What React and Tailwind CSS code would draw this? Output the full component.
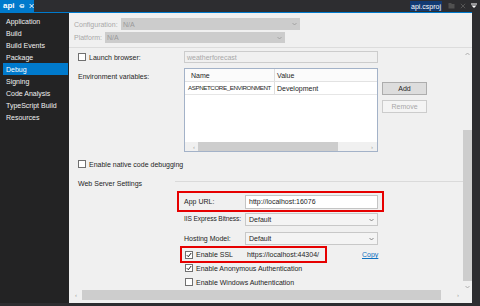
import React from "react";

function Chevron({ color = "#707070" }) {
  return (
    <svg width="5" height="4" viewBox="0 0 5 4" className="shrink-0">
      <path d="M0.5 1 L2.5 3 L4.5 1" fill="none" stroke={color} strokeWidth="0.8" />
    </svg>
  );
}

function Check({ checked }) {
  return (
    <div className="w-[8px] h-[8px] bg-white border border-[#707070] flex items-center justify-center shrink-0">
      {checked && (
        <svg width="6" height="6" viewBox="0 0 6 6">
          <path d="M0.8 3.2 L2.3 4.7 L5.2 1" fill="none" stroke="#1e1e1e" strokeWidth="1" />
        </svg>
      )}
    </div>
  );
}

function Drop({ value, w = "w-[133px]" }) {
  return (
    <div className={`${w} h-[13px] bg-[#f4f4f4] border border-[#c8c8c8] flex items-center justify-between pl-[3px] pr-[3px]`}>
      <span>{value}</span>
      <Chevron />
    </div>
  );
}

const nav = [
  "Application",
  "Build",
  "Build Events",
  "Package",
  "Debug",
  "Signing",
  "Code Analysis",
  "TypeScript Build",
  "Resources",
];

export default function App() {
  return (
    <div className="w-[480px] h-[306px] bg-[#2d2d30] flex flex-col overflow-hidden font-['Liberation_Sans',Arial,sans-serif] text-[7px] leading-none text-[#1e1e1e] whitespace-nowrap">
      {/* top bar */}
      <div className="h-[12px] flex items-stretch shrink-0">
        <div className="w-[34px] bg-[#007acc] flex items-center pl-[3px] gap-[4px] text-white">
          <span className="text-[8px] font-bold">api</span>
          <svg width="7" height="6" viewBox="0 0 7 6">
            <path d="M0 3 H2 M2 1.2 V4.8 M2 1.5 H5.5 V4.5 H2 M2 3.8 H5.5" fill="none" stroke="white" strokeWidth="0.9" />
          </svg>
          <svg width="6" height="6" viewBox="0 0 6 6">
            <path d="M0.8 0.8 L5.2 5.2 M5.2 0.8 L0.8 5.2" stroke="white" strokeWidth="1.1" />
          </svg>
        </div>
        <div className="flex-1" />
        <div className="flex items-center">
          <span className="bg-[#123a73] text-white text-[7px] px-[1px] h-[10px] flex items-center">api.csproj</span>
          <svg width="7" height="6" viewBox="0 0 7 6" className="ml-[6px]">
            <rect x="0.5" y="1" width="6" height="4.5" fill="#505050" />
            <rect x="0.5" y="0" width="3" height="1.5" fill="#505050" />
          </svg>
          <svg width="6" height="6" viewBox="0 0 6 6" className="ml-[5px]">
            <path d="M0.8 0.8 L5.2 5.2 M5.2 0.8 L0.8 5.2" stroke="#555" strokeWidth="1" />
          </svg>
          <svg width="6" height="6" viewBox="0 0 6 6" className="ml-[5px] mr-[3px]">
            <rect x="0" y="0.5" width="6" height="1" fill="white" />
            <path d="M0.5 2.5 H5.5 L3 5 Z" fill="white" />
          </svg>
        </div>
      </div>
      <div className="h-[1px] w-[472px] bg-[#007acc] shrink-0" />

      {/* body */}
      <div className="h-[290px] flex shrink-0">
        {/* sidebar */}
        <div className="w-[69px] bg-[#232324] pt-[2px] flex flex-col text-[#f1f1f1]">
          {nav.map((n) =>
            n === "Debug" ? (
              <div key={n} className="h-[12px] ml-[3px] mr-[1px] pl-[3px] bg-[#007acc] flex items-center text-white">
                {n}
              </div>
            ) : (
              <div key={n} className="h-[12px] pl-[6px] flex items-center">
                {n}
              </div>
            )
          )}
        </div>

        {/* main */}
        <div className="w-[403px] bg-[#f0f0f0] flex flex-col">
          {/* header */}
          <div className="h-[34px] flex flex-col pl-[5px] pt-[5px] gap-[2px] text-[#a8a8a8] shrink-0">
            <div className="h-[12px] flex items-center">
              <span className="w-[47px]">Configuration:</span>
              <div className="w-[179px] h-[12px] bg-[#cccccc] flex items-center justify-between pl-[2px] pr-[3px] text-[#9a9a9a]">
                <span>N/A</span>
                <Chevron color="#999" />
              </div>
            </div>
            <div className="h-[11px] flex items-center">
              <span className="w-[31px]">Platform:</span>
              <div className="w-[180px] h-[11px] bg-[#cccccc] flex items-center justify-between pl-[2px] pr-[3px] text-[#9a9a9a]">
                <span>N/A</span>
                <Chevron color="#999" />
              </div>
            </div>
          </div>
          <div className="h-[1px] bg-[#dcdcdc] shrink-0" />

          {/* scroll region */}
          <div className="flex-1 flex min-h-0">
            <div className="w-[394px] flex flex-col">
              <div className="h-[242px] flex flex-col pl-[9px] overflow-hidden">
                {/* launch browser */}
                <div className="mt-[3px] h-[12px] flex items-center">
                  <div className="w-[106px] flex items-center gap-[3px]">
                    <Check />
                    <span>Launch browser:</span>
                  </div>
                  <div className="w-[194px] h-[12px] border border-[#cccccc] flex items-center pl-[2px] text-[#a8a8a8]">
                    weatherforecast
                  </div>
                </div>

                {/* env vars */}
                <div className="mt-[5px] h-[84px] flex items-start">
                  <div className="w-[106px] pt-[5px]">Environment variables:</div>
                  <div className="w-[194px] h-[84px] bg-white border border-[#a3b2c8] flex flex-col">
                    <div className="h-[13px] flex items-stretch border-b border-[#e2e2e2] bg-[#fbfbfb]">
                      <div className="w-[90px] pl-[6px] flex items-center border-r border-[#dedede]">Name</div>
                      <div className="flex-1 pl-[2px] flex items-center">Value</div>
                    </div>
                    <div className="h-[13px] flex items-stretch border-b border-[#e6e6e6]">
                      <div className="w-[90px] pl-[3px] flex items-center border-r border-[#dedede] tracking-[-0.4px] text-[6.2px] overflow-hidden">
                        ASPNETCORE_ENVIRONMENT
                      </div>
                      <div className="flex-1 pl-[2px] flex items-center">Development</div>
                    </div>
                    <div className="flex-1" />
                    <div className="h-[9px] bg-[#f0f0f0] flex items-center">
                      <span className="w-[13px] pl-[8px] text-[#a0a0a0] text-[6px]">‹</span>
                      <div className="w-[140px] h-[9px] bg-[#cdcdcd]" />
                      <div className="flex-1" />
                      <span className="pr-[4px] text-[#a0a0a0] text-[6px]">›</span>
                    </div>
                  </div>
                  <div className="ml-[4px] flex flex-col">
                    <div className="mt-[14px] w-[45px] h-[13px] bg-[#dddddd] border border-[#adadad] flex items-center justify-center">
                      Add
                    </div>
                    <div className="mt-[5px] w-[45px] h-[13px] bg-[#f4f4f4] border border-[#cccccc] flex items-center justify-center text-[#a8a8a8]">
                      Remove
                    </div>
                  </div>
                </div>

                {/* native */}
                <div className="mt-[6px] h-[12px] flex items-center gap-[3px]">
                  <Check />
                  <span>Enable native code debugging</span>
                </div>

                {/* web server settings */}
                <div className="mt-[7px] h-[12px] flex items-center">
                  <span className="w-[97px]">Web Server Settings</span>
                  <div className="flex-1 h-[1px] bg-[#dadada] -mt-[3px]" />
                </div>

                {/* app url box */}
                <div className="mt-[2px] ml-[99px] w-[207px] h-[21px] border-2 border-[#e60000] flex items-center pl-[5px]">
                  <span className="w-[61px]">App URL:</span>
                  <div className="w-[133px] h-[14px] bg-white border border-[#c4c4c4] flex items-center pl-[3px]">
                    http://localhost:16076
                  </div>
                </div>

                {/* iis */}
                <div className="mt-[1px] ml-[106px] h-[13px] flex items-center">
                  <span className="w-[61px] text-[6.6px] tracking-[-0.1px]">IIS Express Bitness:</span>
                  <Drop value="Default" />
                </div>

                {/* hosting */}
                <div className="mt-[6px] ml-[106px] h-[13px] flex items-center">
                  <span className="w-[61px]">Hosting Model:</span>
                  <Drop value="Default" />
                </div>

                {/* ssl */}
                <div className="mt-[1px] ml-[102px] flex items-center">
                  <div className="w-[147px] h-[17px] border-2 border-[#e60000] flex items-center pl-[3px]">
                    <Check checked />
                    <span className="ml-[3px] w-[51px]">Enable SSL</span>
                    <span>https://localhost:44304/</span>
                  </div>
                  <span className="ml-[35px] text-[#0e70c0] underline">Copy</span>
                </div>

                {/* anon */}
                <div className="ml-[107px] h-[10px] flex items-center gap-[3px]">
                  <Check checked />
                  <span>Enable Anonymous Authentication</span>
                </div>

                {/* windows */}
                <div className="mt-[4px] ml-[107px] h-[10px] flex items-center gap-[3px]">
                  <Check />
                  <span>Enable Windows Authentication</span>
                </div>
              </div>

              {/* horizontal scrollbar */}
              <div className="h-[10px] flex items-center">
                <span className="w-[13px] pl-[6px] text-[#a0a0a0] text-[6px]">‹</span>
                <div className="w-[359px] h-[10px] bg-[#cdcdcd]" />
                <div className="flex-1" />
                <span className="pr-[4px] text-[#a0a0a0] text-[6px]">›</span>
              </div>
            </div>

            {/* vertical scrollbar */}
            <div className="w-[9px] flex flex-col items-stretch">
              <div className="h-[12px] flex items-center justify-center">
                <svg width="5" height="4" viewBox="0 0 5 4">
                  <path d="M0.5 3 L2.5 1 L4.5 3" fill="none" stroke="#a0a0a0" strokeWidth="0.8" />
                </svg>
              </div>
              <div className="h-[70px]" />
              <div className="h-[151px] bg-[#cdcdcd]" />
              <div className="h-[12px] flex items-center justify-center">
                <Chevron color="#a0a0a0" />
              </div>
            </div>
          </div>
        </div>
      </div>
    </div>
  );
}
